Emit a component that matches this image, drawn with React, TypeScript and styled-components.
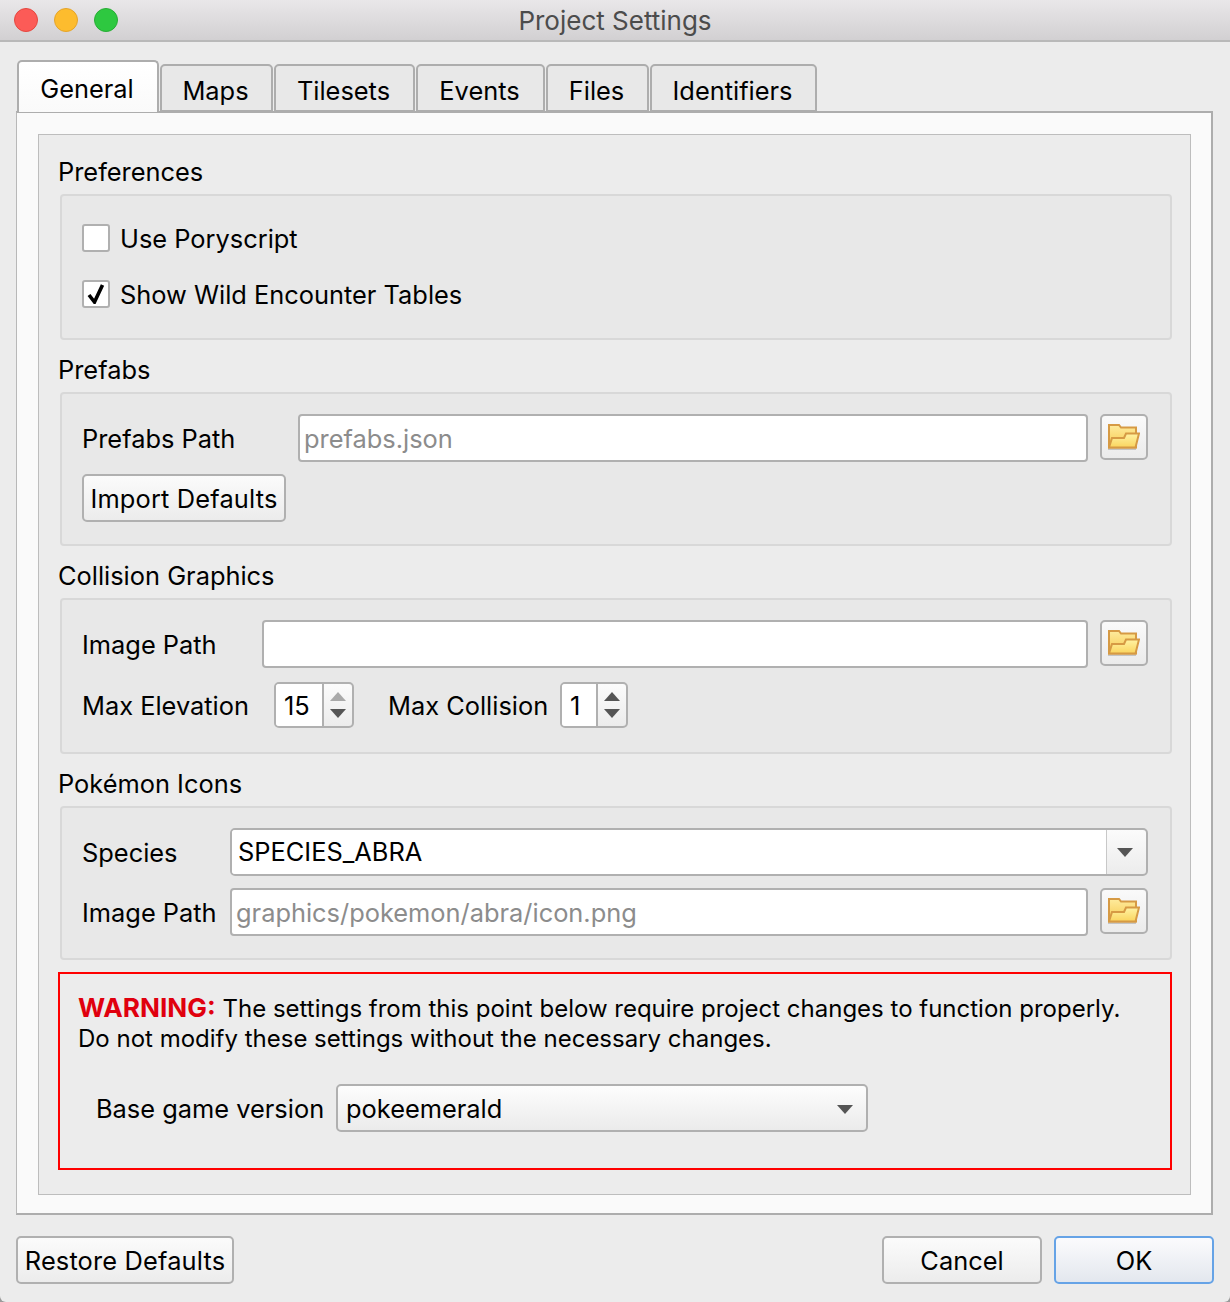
import React from "react";
import styled, { createGlobalStyle } from "styled-components";

const Global = createGlobalStyle`
  html, body { margin: 0; padding: 0; background: #9a9a9a; }
  * { box-sizing: border-box; }
`;

const Window = styled.div`
  width: 1230px;
  height: 1302px;
  background: #ececec;
  font-family: Inter, "Liberation Sans", sans-serif;
  font-size: 25.4px;
  line-height: 30px;
  color: #000;
  overflow: hidden;
  border-radius: 0 0 6px 6px;
`;

const TitleBar = styled.div`
  height: 42px;
  position: relative;
  display: flex;
  align-items: center;
  justify-content: center;
  padding-top: 2px;
  background: linear-gradient(#e9e7e9, #d2d0d2);
  border-bottom: 2px solid #b9b9b9;
  color: #4c4c4c;
  font-size: 26px;
`;

const Lights = styled.div`
  position: absolute;
  left: 14px;
  top: 8px;
  display: flex;
  gap: 16px;
`;

const Light = styled.span<{ $fill: string; $edge: string }>`
  width: 24px;
  height: 24px;
  border-radius: 50%;
  background: ${(p) => p.$fill};
  border: 1px solid ${(p) => p.$edge};
`;

const TabStrip = styled.div`
  display: flex;
  align-items: flex-end;
  height: 70px;
  padding-left: 17px;
  gap: 1px;
  position: relative;
  z-index: 1;
  margin-bottom: -1px;
`;

const Tab = styled.div<{ $active?: boolean; $w: number }>`
  width: ${(p) => p.$w}px;
  height: ${(p) => (p.$active ? 52 : 48)}px;
  display: flex;
  align-items: center;
  justify-content: center;
  padding-right: 2px;
  border: 2px solid #adadad;
  border-radius: 5px 5px 0 0;
  background: ${(p) => (p.$active ? "linear-gradient(#fff, #fafafa)" : "#e8e8e8")};
  ${(p) => (p.$active ? "border-bottom: none; padding-top: 4px;" : "padding-top: 5px;")}
`;

const Pane = styled.div`
  width: 1197px;
  height: 1104px;
  margin-left: 16px;
  padding: 21px 20px 18px 21px;
  background: #fafafa;
  border: 2px solid #adadad;
  border-left-width: 1px;
  border-left-color: #b8b8b8;
`;

const Inner = styled.div`
  height: 1061px;
  background: #ececec;
  border: 1px solid #bdbdbd;
  padding: 22px 18px 0 19px;
`;

const GroupTitle = styled.div`
  margin: 0 0 7px 0;
  height: 30px;
  line-height: 30px;
`;

const GroupBox = styled.div<{ $pt: number; $pb: number; $gap: number }>`
  margin: 0 0 15px 2px;
  padding: ${(p) => p.$pt}px 22px ${(p) => p.$pb}px 20px;
  display: flex;
  flex-direction: column;
  gap: ${(p) => p.$gap}px;
  background: #e8e8e8;
  border: 2px solid #d8d8d8;
  border-radius: 4px;
`;

const CheckRow = styled.div`
  display: flex;
  align-items: center;
  gap: 10px;
  height: 28px;
`;

const CheckBox = styled.span`
  width: 28px;
  height: 28px;
  background: #fff;
  border: 2px solid #b0b0b0;
  border-radius: 3px;
  display: flex;
  align-items: center;
  justify-content: center;
`;

const CheckLabel = styled.span`
  padding-top: 1px;
`;

const Row = styled.div`
  display: flex;
  align-items: flex-start;
`;

const Label = styled.div<{ $w: number; $h?: number }>`
  width: ${(p) => p.$w}px;
  height: ${(p) => p.$h ?? 48}px;
  flex: none;
  display: flex;
  align-items: center;
  padding-top: 1px;
`;

const Input = styled.div<{ $muted?: boolean }>`
  flex: 1;
  height: 48px;
  margin-right: 12px;
  padding: 1px 4px 0;
  display: flex;
  align-items: center;
  background: #fff;
  border: 2px solid #b0b0b0;
  border-radius: 4px;
  color: ${(p) => (p.$muted ? "#8c8c8c" : "#000")};
`;

const FolderButton = styled.div`
  width: 48px;
  height: 46px;
  flex: none;
  display: flex;
  align-items: center;
  justify-content: center;
  background: linear-gradient(#fafafa, #ebebeb);
  border: 2px solid #b0b0b0;
  border-radius: 5px;
`;

const PushButton = styled.div<{ $w: number; $default?: boolean; $spaced?: boolean }>`
  width: ${(p) => p.$w}px;
  height: 48px;
  flex: none;
  display: flex;
  align-items: center;
  justify-content: center;
  padding-top: 2px;
  letter-spacing: ${(p) => (p.$spaced ? "0.16px" : "normal")};
  background: ${(p) =>
    p.$default ? "linear-gradient(#fbfbfd, #e3e7ee)" : "linear-gradient(#fbfbfb, #ececec)"};
  border: 2px solid ${(p) => (p.$default ? "#66a3e6" : "#b0b0b0")};
  border-radius: 5px;
`;

const Spin = styled.div<{ $w: number; $after?: number }>`
  width: ${(p) => p.$w}px;
  height: 46px;
  flex: none;
  margin-right: ${(p) => p.$after ?? 0}px;
  display: flex;
  background: linear-gradient(#fbfbfb, #ececec);
  border: 2px solid #b0b0b0;
  border-radius: 5px;
`;

const SpinValue = styled.div`
  flex: 1;
  padding: 1px 0 0 8px;
  display: flex;
  align-items: center;
  background: #fff;
  border-right: 2px solid #b0b0b0;
  border-radius: 3px 0 0 3px;
`;

const SpinArrows = styled.div`
  width: 28px;
  flex: none;
  display: flex;
  align-items: center;
  justify-content: center;
`;

const Combo = styled.div`
  flex: 1;
  height: 48px;
  display: flex;
  background: linear-gradient(#fbfbfb, #ececec);
  border: 2px solid #b0b0b0;
  border-radius: 5px;
`;

const ComboText = styled.div`
  flex: 1;
  padding-left: 6px;
  display: flex;
  align-items: center;
  background: #fff;
  border-right: 1px solid #c8c8c8;
  border-radius: 3px 0 0 3px;
`;

const ComboArrow = styled.div`
  width: 39px;
  flex: none;
  padding-right: 3px;
  display: flex;
  align-items: center;
  justify-content: center;
`;

const Select = styled.div`
  width: 532px;
  height: 48px;
  flex: none;
  padding: 2px 13px 0 8px;
  display: flex;
  align-items: center;
  justify-content: space-between;
  background: linear-gradient(#fdfdfd, #ebebeb);
  border: 2px solid #b0b0b0;
  border-radius: 5px;
`;

const Warning = styled.div`
  height: 198px;
  margin-top: -3px;
  padding: 19px 18px 0;
  border: 2px solid #f00;
  font-size: 24px;
`;

const WarningWord = styled.strong`
  color: #e0000e;
  font-size: 26.2px;
  font-weight: 700;
`;

const VersionRow = styled.div`
  display: flex;
  margin: 30px 0 0 18px;
  font-size: 25.4px;
`;

const Footer = styled.div`
  display: flex;
  justify-content: space-between;
  padding: 21px 16px 0;
`;

const FooterRight = styled.div`
  display: flex;
  gap: 12px;
`;

const Triangle = () => (
  <svg width="16" height="9" viewBox="0 0 16 9" style={{ display: "block" }}>
    <path d="M0 0 L16 0 L8 9 Z" fill="#555" />
  </svg>
);

const SpinIcon = ({ dim }: { dim?: boolean }) => (
  <svg width="16" height="26" viewBox="0 0 16 26" style={{ display: "block" }}>
    <path d="M8 0 L16 9 L0 9 Z" fill={dim ? "#a9a9a9" : "#555"} />
    <path d="M0 17 L16 17 L8 26 Z" fill="#555" />
  </svg>
);

const Check = () => (
  <svg width="18" height="20" viewBox="0 0 18 20" style={{ display: "block" }}>
    <path d="M2 11 L7.5 18 L15.5 1" fill="none" stroke="#000" strokeWidth="3.6" />
  </svg>
);

const Folder = () => (
  <svg width="32" height="26" viewBox="0 0 32 26" style={{ display: "block" }}>
    <defs>
      <linearGradient id="fb" x1="0" y1="0" x2="0" y2="1">
        <stop offset="0" stopColor="#feeb9c" />
        <stop offset="1" stopColor="#f6c950" />
      </linearGradient>
      <linearGradient id="ff" x1="0" y1="0" x2="0" y2="1">
        <stop offset="0" stopColor="#fff3a4" />
        <stop offset="1" stopColor="#fad45e" />
      </linearGradient>
    </defs>
    <path d="M0 24.5 H28 V26 H0 Z" fill="#c4c4c4" />
    <path d="M1 1 H11 L13 3.5 H28 V23.5 H1 Z" fill="url(#fb)" stroke="#d69a44" strokeWidth="2" />
    <path d="M4 14 H16 L18 9.5 H31 L27.5 23.5 H1 Z" fill="url(#ff)" stroke="#d69a44" strokeWidth="2" />
  </svg>
);

export default function App() {
  return (
    <Window>
      <Global />
      <TitleBar>
        <Lights>
          <Light $fill="#fc5b57" $edge="#e5473f" />
          <Light $fill="#fdbc2e" $edge="#e5a42a" />
          <Light $fill="#2ec840" $edge="#27ad35" />
        </Lights>
        Project Settings
      </TitleBar>
      <TabStrip>
        <Tab $active $w={142}>General</Tab>
        <Tab $w={113}>Maps</Tab>
        <Tab $w={141}>Tilesets</Tab>
        <Tab $w={129}>Events</Tab>
        <Tab $w={103}>Files</Tab>
        <Tab $w={167}>Identifiers</Tab>
      </TabStrip>
      <Pane>
        <Inner>
          <GroupTitle>Preferences</GroupTitle>
          <GroupBox $pt={28} $pb={30} $gap={28}>
            <CheckRow>
              <CheckBox />
              <CheckLabel>Use Poryscript</CheckLabel>
            </CheckRow>
            <CheckRow>
              <CheckBox><Check /></CheckBox>
              <CheckLabel>Show Wild Encounter Tables</CheckLabel>
            </CheckRow>
          </GroupBox>

          <GroupTitle>Prefabs</GroupTitle>
          <GroupBox $pt={20} $pb={22} $gap={12}>
            <Row>
              <Label $w={216}>Prefabs Path</Label>
              <Input $muted>prefabs.json</Input>
              <FolderButton><Folder /></FolderButton>
            </Row>
            <Row>
              <PushButton $w={204} $spaced>Import Defaults</PushButton>
            </Row>
          </GroupBox>

          <GroupTitle>Collision Graphics</GroupTitle>
          <GroupBox $pt={20} $pb={24} $gap={14}>
            <Row>
              <Label $w={180}>Image Path</Label>
              <Input />
              <FolderButton><Folder /></FolderButton>
            </Row>
            <Row>
              <Label $w={192} $h={46}>Max Elevation</Label>
              <Spin $w={80} $after={34}>
                <SpinValue>15</SpinValue>
                <SpinArrows><SpinIcon dim /></SpinArrows>
              </Spin>
              <Label $w={172} $h={46}>Max Collision</Label>
              <Spin $w={68}>
                <SpinValue>1</SpinValue>
                <SpinArrows><SpinIcon /></SpinArrows>
              </Spin>
            </Row>
          </GroupBox>

          <GroupTitle>Pokémon Icons</GroupTitle>
          <GroupBox $pt={20} $pb={22} $gap={12}>
            <Row>
              <Label $w={148}>Species</Label>
              <Combo>
                <ComboText>SPECIES_ABRA</ComboText>
                <ComboArrow><Triangle /></ComboArrow>
              </Combo>
            </Row>
            <Row>
              <Label $w={148}>Image Path</Label>
              <Input $muted>graphics/pokemon/abra/icon.png</Input>
              <FolderButton><Folder /></FolderButton>
            </Row>
          </GroupBox>

          <Warning>
            <WarningWord>WARNING:</WarningWord> The settings from this point below require project changes to function properly.
            <br />
            Do not modify these settings without the necessary changes.
            <VersionRow>
              <Label $w={240}>Base game version</Label>
              <Select>
                pokeemerald
                <Triangle />
              </Select>
            </VersionRow>
          </Warning>
        </Inner>
      </Pane>
      <Footer>
        <PushButton $w={218} $spaced>Restore Defaults</PushButton>
        <FooterRight>
          <PushButton $w={160}>Cancel</PushButton>
          <PushButton $w={160} $default>OK</PushButton>
        </FooterRight>
      </Footer>
    </Window>
  );
}
